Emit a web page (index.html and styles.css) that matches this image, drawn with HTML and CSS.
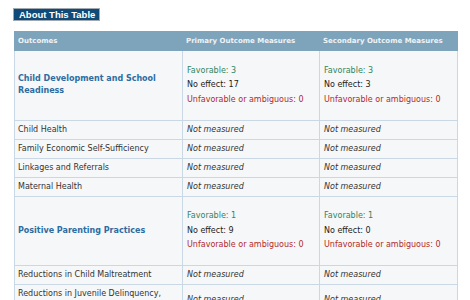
FILE: index.html
```html
<!DOCTYPE html>
<html>
<head>
<meta charset="utf-8">
<link rel="stylesheet" href="styles.css">
</head>
<body>
<div class="page">
  <div class="btn-row"><span class="about-btn">About This Table</span></div>
  <table class="outcomes">
    <colgroup>
      <col class="c1"><col class="c2"><col class="c3">
    </colgroup>
    <thead>
      <tr><th>Outcomes</th><th>Primary Outcome Measures</th><th>Secondary Outcome Measures</th></tr>
    </thead>
    <tbody>
      <tr class="big">
        <td><a class="title">Child Development and School Readiness</a></td>
        <td><div class="res"><div class="fav">Favorable: 3</div><div class="none">No effect: 17</div><div class="unf">Unfavorable or ambiguous: 0</div></div></td>
        <td><div class="res"><div class="fav">Favorable: 3</div><div class="none">No effect: 3</div><div class="unf">Unfavorable or ambiguous: 0</div></div></td>
      </tr>
      <tr><td>Child Health</td><td class="nm">Not measured</td><td class="nm">Not measured</td></tr>
      <tr><td>Family Economic Self-Sufficiency</td><td class="nm">Not measured</td><td class="nm">Not measured</td></tr>
      <tr><td>Linkages and Referrals</td><td class="nm">Not measured</td><td class="nm">Not measured</td></tr>
      <tr><td>Maternal Health</td><td class="nm">Not measured</td><td class="nm">Not measured</td></tr>
      <tr class="big">
        <td><a class="title">Positive Parenting Practices</a></td>
        <td><div class="res"><div class="fav">Favorable: 1</div><div class="none">No effect: 9</div><div class="unf">Unfavorable or ambiguous: 0</div></div></td>
        <td><div class="res"><div class="fav">Favorable: 1</div><div class="none">No effect: 0</div><div class="unf">Unfavorable or ambiguous: 0</div></div></td>
      </tr>
      <tr><td>Reductions in Child Maltreatment</td><td class="nm">Not measured</td><td class="nm">Not measured</td></tr>
      <tr><td>Reductions in Juvenile Delinquency, Family Violence, and Crime</td><td class="nm">Not measured</td><td class="nm">Not measured</td></tr>
    </tbody>
  </table>
</div>
</body>
</html>
```
FILE: styles.css
```css
html, body {
  margin: 0;
  padding: 0;
  background: #ffffff;
}
.page {
  padding: 8px 13px 0 14px;
  font-family: "DejaVu Sans", Verdana, sans-serif;
}
.btn-row {
  display: flex;
  height: 23px;
  align-items: flex-start;
}
.about-btn {
  display: block;
  background: #0f4a78;
  border: 1px solid #a0a8b0;
  color: #ffffff;
  font-family: "Liberation Sans", Arial, sans-serif;
  font-weight: bold;
  font-size: 9.5px;
  line-height: 11px;
  padding: 0 4px 0 5px;
  margin-left: -1px;
}
.outcomes {
  border-collapse: collapse;
  width: 443px;
  table-layout: fixed;
  font-size: 8px;
  color: #333333;
  border: 1px solid #c6d6e2;
}
.c1 { width: 168px; }
.c2 { width: 137px; }
.c3 { width: 138px; }
.outcomes th {
  background: #7ea4bc;
  color: #eef3f6;
  font-weight: bold;
  font-size: 7px;
  text-align: left;
  height: 18px;
  padding: 0 3px;
  border: 1px solid #7ea4bc;
}
.outcomes td {
  background: #f6f7f8;
  border: 1px solid #c9d8e4;
  padding: 3px 3px 3px 3px;
  height: 12px;
  line-height: 12px;
  vertical-align: middle;
}
.outcomes td + td {
  padding-left: 4px;
}
.title {
  color: #2d6ca1;
  font-weight: bold;
  font-size: 8px;
  line-height: 12px;
}
.res {
  padding: 9.5px 0;
}
.res div {
  line-height: 14.5px;
}
.fav { color: #2f8560; }
.none { color: #222222; }
.unf { color: #b22a2a; }
.nm {
  font-style: italic;
}
```
